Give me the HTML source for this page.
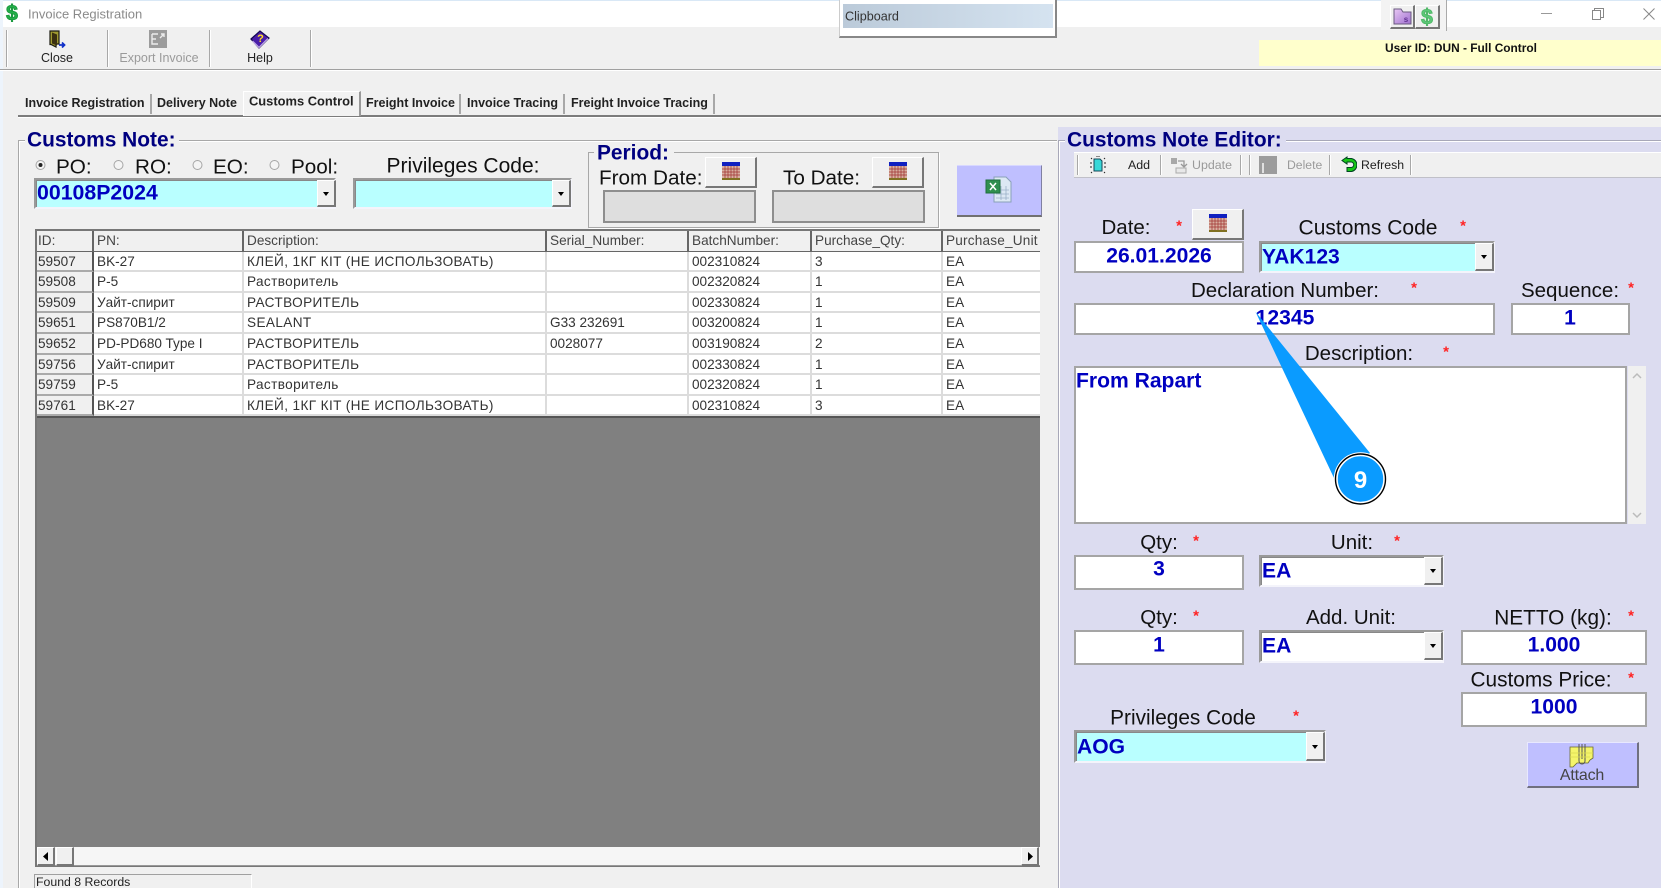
<!DOCTYPE html>
<html><head><meta charset="utf-8"><title>Invoice Registration</title>
<style>
html,body{margin:0;padding:0;background:#f0f0f0}
#p{position:relative;width:1661px;height:888px;overflow:hidden;background:#f0f0f0;font-family:"Liberation Sans",Arial,sans-serif;color:#111;filter:blur(.35px)}
#p div,#p svg{position:absolute;box-sizing:border-box}
.c,.l{position:absolute;white-space:nowrap;line-height:1;margin-top:1px}
.c{transform:translate(-50%,-50%)}
.l{transform:translateY(-50%)}
.n{margin-top:0}
.h{font-weight:bold;font-size:20.9px;color:#000080}
.f{font-size:20.5px;color:#111}
.v{font-weight:bold;font-size:21.1px;color:#0000c0}
.s{position:absolute;color:#f22;font-size:15px;font-weight:bold;line-height:1;transform:translate(-50%,-50%);margin-top:3px}
.tb{font-size:12.5px;color:#222}
.g{color:#9a9a9a}
.tab{font-size:12.5px;font-weight:bold;color:#222}
.sep{width:2px;background:linear-gradient(90deg,#a8a8a8 50%,#fff 50%)}
.in{background:#fff;border:2px solid #a5a5a5}
.cb{border:2px solid;border-color:#999 #f4f4fb #f4f4fb #999;box-shadow:inset 1px 1px 0 #888}
.dd{width:19px;background:#f0f0f0;border:1px solid;border-color:#fff #777 #777 #fff;border-bottom-width:2px;border-right-width:2px}
.dd:after{content:"";position:absolute;left:5px;top:45%;border:3.5px solid transparent;border-top:4.5px solid #000;border-bottom:0}
.btn{background:#f0f0f0;border:1px solid;border-color:#fff #777 #777 #fff;border-bottom-width:2px;border-right-width:2px}
.row{position:absolute;left:0;width:1003px;display:flex;height:20.6px;font-size:13.6px;line-height:19.4px;color:#333;background:#fff}
.row span{display:block;height:100%;padding-left:3px;overflow:hidden;white-space:nowrap;box-sizing:border-box;border-right:2px solid #dcdcdc;border-bottom:2px solid #dcdcdc;flex:none}
.row span:first-child{background:#f0f0f0;border-right:2px solid #555;border-bottom:2px solid #aaa;width:57px;padding-left:1px}
.row span:nth-child(2){width:150px}.row span:nth-child(3){width:303px;letter-spacing:.38px}.row span:nth-child(4){width:142px}.row span:nth-child(5){width:123px}.row span:nth-child(6){width:131px}.row span:nth-child(7){width:97px;border-right:0}
.hd span{background:#f0f0f0;border-right:2px solid #666;border-bottom:2px solid #666;color:#444;line-height:20px}
.hd span:first-child{border-right:2px solid #666;border-bottom:2px solid #666}
.hd span:nth-child(3){letter-spacing:0}
.hd span:nth-child(7){letter-spacing:.2px}
</style></head><body>
<div id="p">
<!-- window chrome -->
<div style="left:0;top:0;width:1661px;height:27px;background:#fff"></div>
<div style="left:0;top:0;width:1661px;height:1px;background:#d9e8f6"></div>
<div style="left:0;top:0;width:3px;height:888px;background:#edf4fc"></div>
<svg style="left:2px;top:2px" width="22" height="22" viewBox="0 0 22 22"><text x="10" y="18" text-anchor="middle" font-family="Liberation Sans" font-weight="bold" font-size="21" fill="#25b04a" stroke="#1b9a40" stroke-width="1">$</text></svg>
<span class="l n" style="left:28px;top:14px;font-size:13px;color:#8a8a8a">Invoice Registration</span>

<!-- toolbar -->
<div style="left:0;top:69px;width:1661px;height:1px;background:#a0a0a0"></div>
<div style="left:0;top:70px;width:1661px;height:1px;background:#fff"></div>
<div class="sep" style="left:6px;top:30px;height:37px"></div>
<div class="sep" style="left:107px;top:30px;height:37px"></div>
<div class="sep" style="left:209px;top:30px;height:37px"></div>
<div class="sep" style="left:310px;top:30px;height:37px"></div>
<svg style="left:48px;top:30px" width="18" height="19" viewBox="0 0 18 19"><path d="M2 1h9v13H8v3l-5-2.5H2z" fill="#a09a30" stroke="#1a1a10" stroke-width="1.2"/><path d="M4 2.5l5 2v11l-5-2z" fill="#3a3010"/><path d="M11 15h5m-2-2.5l2.5 2.5-2.5 2.5" stroke="#1030c8" stroke-width="1.8" fill="none"/></svg>
<span class="c tb n" style="left:57px;top:58px">Close</span>
<svg style="left:149px;top:30px" width="18" height="18" viewBox="0 0 18 18"><rect width="18" height="18" fill="#9c9c9c"/><path d="M3 4h6M3 4v10h6M3 9h4M12 4h3v3M15 4l-4 4" stroke="#ececec" stroke-width="1.4" fill="none"/></svg>
<span class="c tb n g" style="left:159px;top:58px">Export Invoice</span>
<svg style="left:250px;top:30px" width="20" height="19" viewBox="0 0 20 19"><path d="M1 9L10 1l9 7-10 10z" fill="#4a1ea8" stroke="#140850" stroke-width="1.2"/><path d="M2.5 11l6.5 6.5 9-9" fill="none" stroke="#c0a8e8" stroke-width="1.3"/><text x="10.5" y="12" text-anchor="middle" font-size="11" font-weight="bold" font-family="Liberation Sans" fill="#ffe020">?</text></svg>
<span class="c tb n" style="left:260px;top:58px">Help</span>

<!-- clipboard -->
<div style="left:839px;top:0;width:218px;height:38px;background:#fff;border-right:2px solid #888;border-bottom:2px solid #888;border-left:1px solid #ccc"></div>
<div style="left:843px;top:4px;width:210px;height:24px;background:linear-gradient(90deg,#bbcad9,#d5e3f0)"></div>
<span class="l n" style="left:845px;top:17px;font-size:12.6px;color:#333">Clipboard</span>

<!-- top right -->
<div style="left:1381px;top:0;width:65px;height:30px;background:#f3f3f3"></div>
<div class="btn" style="left:1390px;top:5px;width:25px;height:24px"></div>
<div class="btn" style="left:1415px;top:5px;width:25px;height:24px"></div>
<svg style="left:1393px;top:7px" width="19" height="19" viewBox="0 0 19 19"><defs><linearGradient id="fg" x1="0" y1="0" x2="1" y2="1"><stop offset="0" stop-color="#e8c8f4"/><stop offset="1" stop-color="#a070d0"/></linearGradient></defs><path d="M1 2h7l2 3h8v12H1z" fill="url(#fg)" stroke="#6a5a80"/><text x="13" y="15" text-anchor="middle" font-size="8" font-weight="bold" font-family="Liberation Sans" fill="#603090">s</text></svg>
<svg style="left:1417px;top:5px" width="20" height="23" viewBox="0 0 20 23"><text x="10" y="19" text-anchor="middle" font-family="Liberation Sans" font-weight="bold" font-size="21" fill="#5cc878" stroke="#50b868" stroke-width="1">$</text></svg>
<div style="left:1446px;top:0;width:1px;height:31px;background:#aaa"></div>
<div style="left:1541px;top:13px;width:11px;height:1px;background:#999"></div>
<svg style="left:1592px;top:8px" width="12" height="12" viewBox="0 0 12 12"><path d="M.5 2.5h8v9h-8zM2.5 2.5v-2h9v9h-3" fill="none" stroke="#888"/></svg>
<svg style="left:1643px;top:8px" width="12" height="12" viewBox="0 0 12 12"><path d="M.5.5l11 11M11.5.5l-11 11" stroke="#888" fill="none"/></svg>
<div style="left:1259px;top:40px;width:402px;height:26px;background:#ffffcc"></div>
<span class="c" style="left:1461px;top:48px;font-size:11.9px;font-weight:bold;color:#111">User ID: DUN - Full Control</span>

<!-- tabs -->
<div style="left:18px;top:115px;width:1643px;height:2px;background:#7c7c7c"></div>
<div style="left:18px;top:117px;width:1643px;height:1px;background:#fff"></div>
<div style="left:243px;top:91px;width:118px;height:25px;background:#f2f2f2;border-top:1px solid #fff;border-right:2px solid #999;border-left:1px solid #fff"></div>
<div style="left:150px;top:94px;width:2px;height:20px;background:#a8a8a8"></div>
<div style="left:459px;top:94px;width:2px;height:20px;background:#a8a8a8"></div>
<div style="left:563px;top:94px;width:2px;height:20px;background:#a8a8a8"></div>
<div style="left:713px;top:94px;width:2px;height:20px;background:#a8a8a8"></div>
<span class="l tab" style="left:25px;top:102px">Invoice Registration</span>
<span class="l tab" style="left:157px;top:102px">Delivery Note</span>
<span class="l tab" style="left:249px;top:100.5px;font-size:12.9px">Customs Control</span>
<span class="l tab" style="left:366px;top:102px">Freight Invoice</span>
<span class="l tab" style="left:467px;top:102px">Invoice Tracing</span>
<span class="l tab" style="left:571px;top:102px">Freight Invoice Tracing</span>

<!-- Customs note group -->
<div style="left:18px;top:140px;width:1039px;height:1px;background:#a8a8a8"></div>
<div style="left:18px;top:141px;width:1039px;height:1px;background:#fff"></div>
<div style="left:18px;top:140px;width:1px;height:748px;background:#a8a8a8"></div>
<div style="left:19px;top:141px;width:1px;height:747px;background:#fff"></div>
<div style="left:25px;top:128px;width:154px;height:22px;background:#f0f0f0"></div>
<span class="l h" style="left:27px;top:140px">Customs Note:</span>

<svg style="left:33px;top:158px" width="310" height="16" viewBox="0 0 310 16"><g fill="#f4f4f4" stroke="#a5a5a5"><circle cx="7.5" cy="7" r="4.5"/><circle cx="85.5" cy="7" r="4.5"/><circle cx="164.5" cy="7" r="4.5"/><circle cx="241.5" cy="7" r="4.5"/></g><circle cx="7.5" cy="7" r="2" fill="#222"/></svg>
<span class="l" style="left:56px;top:167px;font-size:20.7px">PO:</span>
<span class="l" style="left:135px;top:167px;font-size:20.7px">RO:</span>
<span class="l" style="left:213px;top:167px;font-size:20.7px">EO:</span>
<span class="l" style="left:291px;top:167px;font-size:20.7px">Pool:</span>
<span class="c" style="left:463px;top:165px;font-size:21px">Privileges Code:</span>

<div class="cb" style="left:34px;top:178px;width:302px;height:31px;background:#b9ffff"></div>
<div class="dd" style="left:317px;top:180px;height:27px"></div>
<span class="l" style="left:37px;top:192px;font-size:21.3px;font-weight:bold;color:#0000c0">00108P2024</span>
<div class="cb" style="left:353px;top:178px;width:219px;height:31px;background:#b9ffff"></div>
<div class="dd" style="left:552px;top:180px;height:27px"></div>

<!-- period -->
<div style="left:588px;top:152px;width:351px;height:76px;border:1px solid #a8a8a8;box-shadow:1px 1px 0 #fff"></div>
<div style="left:594px;top:142px;width:80px;height:20px;background:#f0f0f0"></div>
<span class="l h" style="left:597px;top:153px">Period:</span>
<span class="l" style="left:599px;top:178px;font-size:20.7px">From Date:</span>
<span class="l" style="left:783px;top:178px;font-size:20.7px">To Date:</span>
<div class="btn" style="left:705px;top:157px;width:52px;height:31px"></div>
<div class="btn" style="left:872px;top:157px;width:52px;height:31px"></div>
<svg style="left:722px;top:162px" width="18" height="18" viewBox="0 0 18 18"><rect width="18" height="18" fill="#d8b0a0"/><rect width="18" height="4" fill="#1020c0"/><rect y="16" width="18" height="2" fill="#807020"/><path d="M0 7h18M0 10h18M0 13h18M3 4v12M6 4v12M9 4v12M12 4v12M15 4v12" stroke="#a03030" stroke-width=".7"/></svg>
<svg style="left:889px;top:162px" width="18" height="18" viewBox="0 0 18 18"><rect width="18" height="18" fill="#d8b0a0"/><rect width="18" height="4" fill="#1020c0"/><rect y="16" width="18" height="2" fill="#807020"/><path d="M0 7h18M0 10h18M0 13h18M3 4v12M6 4v12M9 4v12M12 4v12M15 4v12" stroke="#a03030" stroke-width=".7"/></svg>
<div style="left:603px;top:190px;width:153px;height:33px;background:#dedede;border:2px solid #8e8e8e"></div>
<div style="left:772px;top:190px;width:153px;height:33px;background:#dedede;border:2px solid #8e8e8e"></div>

<div style="left:957px;top:165px;width:85px;height:52px;background:#bfbfff;border-bottom:2px solid #707070;border-right:1px solid #8080a0;border-top:1px solid #d8d8ff"></div>
<svg style="left:985px;top:176px" width="27" height="27" viewBox="0 0 27 27"><path d="M9 1h12l5 5v20H9z" fill="#dce8f4" stroke="#8aa0b8"/><path d="M11 14h13M11 18h13M11 22h13M16 10v14M21 10v14" stroke="#9ab0c8" stroke-width=".8"/><rect x="1" y="4" width="14" height="13" fill="#2f8f4f" stroke="#1f6f3f"/><path d="M5 7l6 7M11 7l-6 7" stroke="#fff" stroke-width="1.5"/></svg>

<!-- grid -->
<div style="left:35px;top:229px;width:1005px;height:638px;background:#808080;border:2px solid #777;border-right:0;overflow:hidden" id="gr">
<div class="row hd" style="top:0;height:22px"><span>ID:</span><span>PN:</span><span>Description:</span><span>Serial_Number:</span><span>BatchNumber:</span><span>Purchase_Qty:</span><span style="border-right:0">Purchase_Unit</span></div>
<div class="row" style="top:20.6px"><span>59507</span><span>BK-27</span><span>КЛЕЙ, 1КГ КIT (НЕ ИСПОЛЬЗОВАТЬ)</span><span></span><span>002310824</span><span>3</span><span>EA</span></div>
<div class="row" style="top:41.2px"><span>59508</span><span>P-5</span><span>Растворитель</span><span></span><span>002320824</span><span>1</span><span>EA</span></div>
<div class="row" style="top:61.8px"><span>59509</span><span>Уайт-спирит</span><span>РАСТВОРИТЕЛЬ</span><span></span><span>002330824</span><span>1</span><span>EA</span></div>
<div class="row" style="top:82.4px"><span>59651</span><span>PS870B1/2</span><span>SEALANT</span><span>G33 232691</span><span>003200824</span><span>1</span><span>EA</span></div>
<div class="row" style="top:103px"><span>59652</span><span>PD-PD680 Type I</span><span>РАСТВОРИТЕЛЬ</span><span>0028077</span><span>003190824</span><span>2</span><span>EA</span></div>
<div class="row" style="top:123.6px"><span>59756</span><span>Уайт-спирит</span><span>РАСТВОРИТЕЛЬ</span><span></span><span>002330824</span><span>1</span><span>EA</span></div>
<div class="row" style="top:144.2px"><span>59759</span><span>P-5</span><span>Растворитель</span><span></span><span>002320824</span><span>1</span><span>EA</span></div>
<div class="row" style="top:164.8px"><span>59761</span><span>BK-27</span><span>КЛЕЙ, 1КГ КIT (НЕ ИСПОЛЬЗОВАТЬ)</span><span></span><span>002310824</span><span>3</span><span>EA</span></div>
<div style="left:0;top:184.5px;width:1003px;height:2px;background:#555"></div>
</div>
<!-- scrollbar -->
<div style="left:37px;top:847px;width:1003px;height:19px;background:#f6f6f6;border-bottom:1px solid #999"></div>
<div class="btn" style="left:37px;top:847px;width:18px;height:19px"></div>
<div class="btn" style="left:56px;top:847px;width:18px;height:19px"></div>
<div class="btn" style="left:1021px;top:847px;width:18px;height:19px"></div>
<svg style="left:42px;top:852px" width="8" height="9" viewBox="0 0 8 9"><path d="M6 0v9L1 4.5z" fill="#000"/></svg>
<svg style="left:1026px;top:852px" width="8" height="9" viewBox="0 0 8 9"><path d="M2 0v9l5-4.5z" fill="#000"/></svg>
<div style="left:34px;top:874px;width:218px;height:14px;border-top:1px solid #a0a0a0;border-left:1px solid #a0a0a0;border-right:1px solid #fff"></div>
<span class="l n" style="left:36px;top:882px;font-size:12.3px;color:#222">Found 8 Records</span>

<!-- right panel -->
<div style="left:1058px;top:127px;width:603px;height:761px;background:#dcdcf0"></div>
<div style="left:1058px;top:140px;width:603px;height:1px;background:#a8a8b8"></div>
<div style="left:1058px;top:141px;width:603px;height:1px;background:#fff"></div>
<div style="left:1058px;top:140px;width:1px;height:748px;background:#a8a8b8"></div>
<div style="left:1059px;top:141px;width:1px;height:747px;background:#fff"></div>
<div style="left:1065px;top:128px;width:221px;height:22px;background:#dcdcf0"></div>
<span class="l h" style="left:1067px;top:140px">Customs Note Editor:</span>

<div style="left:1074px;top:152px;width:587px;height:26px;background:#f0f0f0;border-top:1px solid #fff;border-bottom:1px solid #c0c0c8"></div>
<div class="sep" style="left:1077px;top:155px;height:20px"></div>
<div class="sep" style="left:1160px;top:155px;height:20px"></div>
<div class="sep" style="left:1240px;top:155px;height:20px"></div>
<div class="sep" style="left:1249px;top:155px;height:20px"></div>
<div class="sep" style="left:1329px;top:155px;height:20px"></div>
<div class="sep" style="left:1410px;top:155px;height:20px"></div>
<svg style="left:1090px;top:156px" width="16" height="18" viewBox="0 0 16 18"><path d="M5 3h5l2 2v10H4V3z" fill="#38d8d8" stroke="#184858"/><path d="M2 3L1 2M14 3l1-1M2 16l-1 1M14 16l1 1M7 0v1M9 0v1M0 7h2M0 11h2M14 7h2M14 11h2" stroke="#222" stroke-width="1"/></svg>
<span class="l n" style="left:1128px;top:165px;font-size:12.4px;color:#222">Add</span>
<svg style="left:1170px;top:157px" width="18" height="17" viewBox="0 0 18 17"><rect x="1" y="1" width="6" height="6" fill="#a8a8a8"/><path d="M8 4h6v5M11 7l3 3 3-3" fill="none" stroke="#999" stroke-width="1.3"/><rect x="6" y="11" width="10" height="5" fill="#e8e8e8" stroke="#aaa"/></svg>
<span class="l n g" style="left:1192px;top:165px;font-size:12.4px">Update</span>
<div style="left:1259px;top:156px;width:18px;height:18px;background:#9c9c9c"></div>
<div style="left:1262px;top:163px;width:2px;height:10px;background:#e0e0e0"></div>
<span class="l n g" style="left:1287px;top:165px;font-size:12.2px">Delete</span>
<svg style="left:1341px;top:156px" width="16" height="17" viewBox="0 0 16 17"><path d="M6 1L1 4.5 6 8V6h4a2.6 2.6 0 0 1 0 5.5H6v4h4.5a6.6 6.6 0 0 0 0-13H6z" fill="#18c818" stroke="#042" stroke-width="1"/></svg>
<span class="l n" style="left:1361px;top:165px;font-size:12.3px;color:#222">Refresh</span>

<!-- right form -->
<span class="c f" style="left:1126px;top:227px">Date:</span><span class="s" style="left:1179px;top:223px">*</span>
<div class="btn" style="left:1192px;top:209px;width:52px;height:31px"></div>
<svg style="left:1209px;top:214px" width="18" height="18" viewBox="0 0 18 18"><rect width="18" height="18" fill="#d8b0a0"/><rect width="18" height="4" fill="#1020c0"/><rect y="16" width="18" height="2" fill="#807020"/><path d="M0 7h18M0 10h18M0 13h18M3 4v12M6 4v12M9 4v12M12 4v12M15 4v12" stroke="#a03030" stroke-width=".7"/></svg>
<span class="c f" style="left:1368px;top:227px;font-size:21px">Customs Code</span><span class="s" style="left:1463px;top:223px">*</span>
<div class="in" style="left:1074px;top:241px;width:170px;height:32px"></div>
<span class="c v" style="left:1159px;top:254.5px">26.01.2026</span>
<div class="cb" style="left:1259px;top:241px;width:236px;height:32px;background:#b9ffff"></div>
<div class="dd" style="left:1475px;top:243px;height:28px"></div>
<span class="l v" style="left:1262px;top:255.5px">YAK123</span>

<span class="c f" style="left:1285px;top:290px">Declaration Number:</span><span class="s" style="left:1414px;top:285px">*</span>
<span class="c f" style="left:1570px;top:290px">Sequence:</span><span class="s" style="left:1631px;top:285px">*</span>
<div class="in" style="left:1074px;top:303px;width:421px;height:32px"></div>
<span class="c v" style="left:1285px;top:317px">12345</span>
<div class="in" style="left:1511px;top:303px;width:119px;height:32px"></div>
<span class="c v" style="left:1570px;top:317px">1</span>

<span class="c f" style="left:1359px;top:353px">Description:</span><span class="s" style="left:1446px;top:349px">*</span>
<div class="in" style="left:1074px;top:366px;width:553px;height:158px"></div>
<span class="l v" style="left:1076px;top:380px">From Rapart</span>
<div style="left:1628px;top:366px;width:18px;height:158px;background:#f0f0f0"></div>
<svg style="left:1632px;top:372px" width="10" height="8" viewBox="0 0 10 8"><path d="M1 6l4-4 4 4" fill="none" stroke="#bbb" stroke-width="1.5"/></svg>
<svg style="left:1632px;top:511px" width="10" height="8" viewBox="0 0 10 8"><path d="M1 2l4 4 4-4" fill="none" stroke="#bbb" stroke-width="1.5"/></svg>

<span class="c f" style="left:1159px;top:542px">Qty:</span><span class="s" style="left:1196px;top:538px">*</span>
<span class="c f" style="left:1352px;top:542px">Unit:</span><span class="s" style="left:1397px;top:538px">*</span>
<div class="in" style="left:1074px;top:555px;width:170px;height:35px"></div>
<span class="c v" style="left:1159px;top:567.5px">3</span>
<div class="cb" style="left:1259px;top:555px;width:185px;height:32px;background:#fff"></div>
<div class="dd" style="left:1424px;top:557px;height:28px"></div>
<span class="l v" style="left:1262px;top:569.5px">EA</span>

<span class="c f" style="left:1159px;top:617px">Qty:</span><span class="s" style="left:1196px;top:613px">*</span>
<span class="c f" style="left:1351px;top:617px">Add. Unit:</span>
<span class="c f" style="left:1553px;top:618px;font-size:20.8px">NETTO (kg):</span><span class="s" style="left:1631px;top:613px">*</span>
<div class="in" style="left:1074px;top:630px;width:170px;height:35px"></div>
<span class="c v" style="left:1159px;top:644px">1</span>
<div class="cb" style="left:1259px;top:630px;width:185px;height:33px;background:#fff"></div>
<div class="dd" style="left:1424px;top:632px;height:28px"></div>
<span class="l v" style="left:1262px;top:645px">EA</span>
<div class="in" style="left:1461px;top:630px;width:186px;height:35px"></div>
<span class="c v" style="left:1554px;top:644px">1.000</span>

<span class="c f" style="left:1541px;top:680px;font-size:20.8px">Customs Price:</span><span class="s" style="left:1631px;top:675px">*</span>
<div class="in" style="left:1461px;top:692px;width:186px;height:35px"></div>
<span class="c v" style="left:1554px;top:706px">1000</span>

<span class="c f" style="left:1183px;top:718px;font-size:20.8px">Privileges Code</span><span class="s" style="left:1296px;top:713px">*</span>
<div class="cb" style="left:1074px;top:730px;width:252px;height:33px;background:#b9ffff"></div>
<div class="dd" style="left:1306px;top:732px;height:29px"></div>
<span class="l v" style="left:1077px;top:745.5px">AOG</span>

<div style="left:1527px;top:742px;width:112px;height:46px;background:#bfbfff;border:1px solid;border-color:#e8e8ff #707080 #707080 #e8e8ff;border-bottom-width:2px;border-right-width:2px"></div>
<svg style="left:1568px;top:744px" width="28" height="25" viewBox="0 0 28 25"><path d="M2 3h23v11l-3 2-2 3H9l-4 4H2z" fill="#f4f46a" stroke="#6a6a30" stroke-width=".8"/><path d="M11 0v17a3 3 0 0 0 6 0V0M14 0v15" fill="none" stroke="#555" stroke-width="1"/><path d="M2 9h23M2 13h20" stroke="#d8d850" stroke-width=".7"/></svg>
<span class="c n" style="left:1582px;top:775.5px;font-size:16px;letter-spacing:-.2px;color:#444">Attach</span>

<!-- callout -->
<svg style="left:1240px;top:300px" width="160" height="215" viewBox="0 0 160 215">
<path d="M15.5 11.7L130 153 94 178z" fill="#0a9bff"/>
<circle cx="120.5" cy="179" r="24.7" fill="#0a9bff" stroke="#fff" stroke-width="4"/>
<circle cx="120.5" cy="179" r="25" fill="none" stroke="#000" stroke-width="1.4"/>
<text x="120.5" y="188" text-anchor="middle" font-family="Liberation Sans" font-weight="bold" font-size="24" fill="#fff">9</text>
</svg>
</div>
</body></html>
